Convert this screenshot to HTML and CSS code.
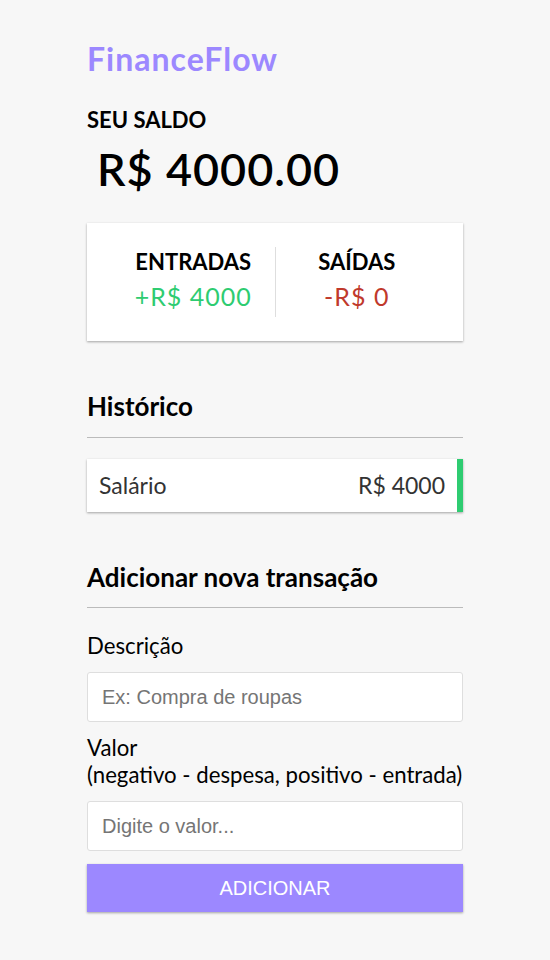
FILE: index.html
```html
<!DOCTYPE html>
<html lang="pt-BR">
<head>
<meta charset="UTF-8">
<title>FinanceFlow</title>
<link rel="stylesheet" href="styles.css">
</head>
<body>
<div class="container">
  <h1 class="brand">FinanceFlow</h1>
  <h4 class="balance-label">Seu saldo</h4>
  <h1 class="balance">R$ 4000.00</h1>

  <div class="inc-exp">
    <div class="inc-exp-col">
      <h4 class="col-title">Entradas</h4>
      <p class="money plus">+R$ 4000</p>
    </div>
    <div class="inc-exp-col">
      <h4 class="col-title">Saídas</h4>
      <p class="money minus">-R$ 0</p>
    </div>
  </div>

  <h3 class="section-title">Histórico</h3>
  <ul class="list">
    <li class="list-item plus"><span>Salário</span><span>R$ 4000</span></li>
  </ul>

  <h3 class="section-title section-title-add">Adicionar nova transação</h3>
  <form class="form">
    <label class="label" for="text">Descrição</label>
    <input class="input" type="text" id="text" placeholder="Ex: Compra de roupas">
    <label class="label label-valor" for="amount">Valor <br>(negativo - despesa, positivo - entrada)</label>
    <input class="input" type="number" id="amount" placeholder="Digite o valor...">
    <button class="btn" type="button">Adicionar</button>
  </form>
</div>
</body>
</html>
```

FILE: styles.css
```css
* { box-sizing: border-box; }

body {
  margin: 0;
  background-color: #f7f7f7;
  font-family: "Lato", "Noto Sans", sans-serif;
  color: #000;
}

.container {
  width: 376px;
  margin: 0 auto;
  padding-top: 40px;
}

.brand {
  margin: 0;
  font-size: 32px;
  font-weight: 700;
  letter-spacing: 1px;
  color: #9c88ff;
  line-height: 1.2;
}

.balance-label {
  margin: 29px 0 0;
  font-size: 22px;
  font-weight: 700;
  text-transform: uppercase;
  line-height: 25px;
}

.balance {
  margin: 10px 0 0 10px;
  font-size: 45px;
  font-weight: 600;
  letter-spacing: 1px;
  line-height: 54px;
}

.inc-exp {
  margin-top: 27px;
  background-color: #fff;
  box-shadow: 0 1px 3px rgba(0,0,0,0.12), 0 1px 2px rgba(0,0,0,0.24);
  padding: 24px 25px;
  display: flex;
}

.inc-exp-col {
  flex: 1;
  text-align: center;
}

.inc-exp-col:first-child {
  border-right: 1px solid #dedede;
}

.col-title {
  margin: 2px 0 0;
  font-size: 22px;
  font-weight: 700;
  text-transform: uppercase;
  line-height: 25px;
}

.money {
  margin: 8px 0 6px;
  font-size: 25px;
  letter-spacing: 1px;
  line-height: 29px;
}

.money.plus { color: #2ecc71; }
.money.minus { color: #c0392b; }

.section-title {
  margin: 50px 0 0;
  font-size: 26px;
  font-weight: 700;
  line-height: 1.2;
  padding-bottom: 14px;
  border-bottom: 1px solid #bbb;
}

.list {
  list-style: none;
  padding: 0;
  margin: 21px 0 0;
}

.list-item {
  background-color: #fff;
  box-shadow: 0 1px 3px rgba(0,0,0,0.12), 0 1px 2px rgba(0,0,0,0.24);
  color: #333;
  display: flex;
  justify-content: space-between;
  padding: 13px 12px;
  font-size: 23px;
  line-height: 27px;
}

.list-item.plus { border-right: 6px solid #2ecc71; }

.section-title-add { margin-top: 50px; }

.form {
  display: flex;
  flex-direction: column;
}

.label {
  font-size: 22.2px;
  line-height: 26.5px;
  margin: 25px 0 13px;
}

.label-valor { margin: 13px 0 13px; }

.input {
  display: block;
  width: 100%;
  height: 50px;
  border: 1px solid #dedede;
  border-radius: 3px;
  background: #fff;
  font-family: "Liberation Sans", Arial, sans-serif;
  font-size: 20px;
  padding: 10px 14px;
  color: #333;
}

.input::placeholder { color: #757575; }

.btn {
  margin: 13px 0 30px;
  height: 48px;
  border: 0;
  background-color: #9c88ff;
  box-shadow: 0 1px 3px rgba(0,0,0,0.12), 0 1px 2px rgba(0,0,0,0.24);
  color: #fff;
  font-family: "Liberation Sans", Arial, sans-serif;
  font-size: 20px;
  text-transform: uppercase;
  width: 100%;
}
```
